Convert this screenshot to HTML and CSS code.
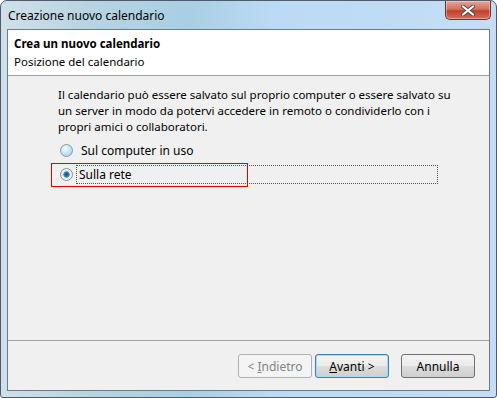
FILE: index.html
```html
<!DOCTYPE html>
<html lang="it">
<head>
  <meta charset="UTF-8" />
  <title>Creazione nuovo calendario</title>
  <link rel="stylesheet" href="styles.css">
</head>
<body>

  <div class="window">
    <div class="title-bar">
      <span class="title">Creazione nuovo calendario</span>
      <button class="close" aria-label="Chiudi">
        <svg width="14" height="11" viewBox="0 0 14 11">
          <path d="M2 1.5 L12 9.5 M12 1.5 L2 9.5" stroke="#4a4a4a" stroke-width="4" stroke-linecap="round"/>
          <path d="M2 1.5 L12 9.5 M12 1.5 L2 9.5" stroke="#ffffff" stroke-width="2.2" stroke-linecap="round"/>
        </svg>
      </button>
    </div>

    <div class="client">
      <div class="header">
        <div class="header-title">Crea un nuovo calendario</div>
        <div class="header-sub">Posizione del calendario</div>
      </div>

      <div class="content">
        <p class="intro">Il calendario può essere salvato sul proprio computer o essere salvato su un server in modo da potervi accedere in remoto o condividerlo con i propri amici o collaboratori.</p>

        <div class="options">
          <label class="option">
            <span class="radio"></span>
            <span class="option-text">Sul computer in uso</span>
          </label>
          <label class="option selected">
            <span class="radio checked"></span>
            <span class="option-text focus">Sulla rete</span>
            <span class="highlight"></span>
          </label>
        </div>
      </div>

      <div class="footer">
        <button class="btn" disabled>&lt; <u>I</u>ndietro</button>
        <button class="btn default"><u>A</u>vanti &gt;</button>
        <button class="btn cancel">Annulla</button>
      </div>
    </div>
  </div>

</body>
</html>
```

FILE: styles.css
```css
body {
  margin: 0;
  padding: 0;
  background: #ffffff;
  font-family: 'Noto Sans', 'Open Sans', sans-serif;
  font-size: 11.5px;
  color: #000;
}

.window {
  width: 495px;
  height: 396px;
  border: 1px solid #505a68;
  border-radius: 7px 7px 3px 3px;
  background: linear-gradient(to right, #cfe0ea 0%, #b7d4e2 18%, #a8cfe3 38%, #bbdaf5 55%, #c4ddf4 100%);
  display: flex;
  flex-direction: column;
}

.title-bar {
  height: 28px;
  display: flex;
  align-items: flex-start;
  padding: 0 5px 0 7px;
}

.title {
  margin-top: 6px;
  font-size: 12px;
}

.close {
  margin-left: auto;
  width: 46px;
  height: 19px;
  border: 1px solid #6b3530;
  border-top: none;
  border-radius: 0 0 5px 5px;
  background: linear-gradient(#e6a597 0%, #d4715e 45%, #c0402b 55%, #d0705a 100%);
  box-shadow: inset 0 0 0 1px rgba(255, 255, 255, 0.35);
  display: flex;
  align-items: center;
  justify-content: center;
  padding: 0;
}

.client {
  flex: 1;
  margin: 0 6px 6px 6px;
  border: 1px solid #6e7b8b;
  background: #f0f0f0;
  display: flex;
  flex-direction: column;
}

.header {
  background: #ffffff;
  border-bottom: 1px solid #a0a0a0;
  padding: 5px 6px 4px;
}

.header-title {
  font-weight: bold;
  line-height: 18px;
}

.header-sub {
  line-height: 18px;
}

.content {
  flex: 1;
  padding: 11px 34px 0 50px;
}

.intro {
  margin: 0;
  line-height: 16px;
}

.options {
  margin-top: 6px;
  display: flex;
  flex-direction: column;
  gap: 5px;
  margin-left: 2px;
}

.option {
  position: relative;
  display: flex;
  align-items: center;
  height: 19px;
}

.radio {
  width: 11px;
  height: 11px;
  border-radius: 50%;
  border: 1px solid #8c9aa8;
  background: radial-gradient(circle at 40% 35%, #f4fbff 0%, #bfe2f7 55%, #8fc6ea 100%);
  margin-right: 6px;
}

.radio.checked {
  border-color: #8f8f8f;
  background: radial-gradient(circle, #1b4f7a 0%, #2f7db2 28%, #4c9ccc 38%, #e6e6e6 44%, #f6f6f6 70%, #d4d4d4 100%);
}

.option-text {
  padding: 0 2px;
  line-height: 17px;
  font-size: 12px;
}

.option-text.focus {
  border: 1px dotted #555;
  width: 356px;
  margin-left: -3px;
  padding-left: 2px;
}

.highlight {
  position: absolute;
  left: -9px;
  top: -2px;
  width: 195px;
  height: 22px;
  border: 1px solid #e00000;
}

.footer {
  border-top: 1px solid #a0a0a0;
  display: flex;
  justify-content: flex-end;
  gap: 3px;
  padding: 13px 14px 12px 0;
}

.btn {
  width: 74px;
  height: 24px;
  font-family: inherit;
  font-size: 12px;
  border: 1px solid #707070;
  border-radius: 3px;
  background: linear-gradient(#f3f3f3 0%, #ebebeb 50%, #dddddd 51%, #cfcfcf 100%);
  color: #000;
  padding: 0;
}

.btn:disabled {
  border-color: #adb2b5;
  background: #f4f4f4;
  color: #838383;
}

.btn.default {
  border-color: #3c7fb1;
  box-shadow: inset 0 0 0 1px #a6dcf6;
}

.btn.cancel {
  margin-left: 9px;
}
```
